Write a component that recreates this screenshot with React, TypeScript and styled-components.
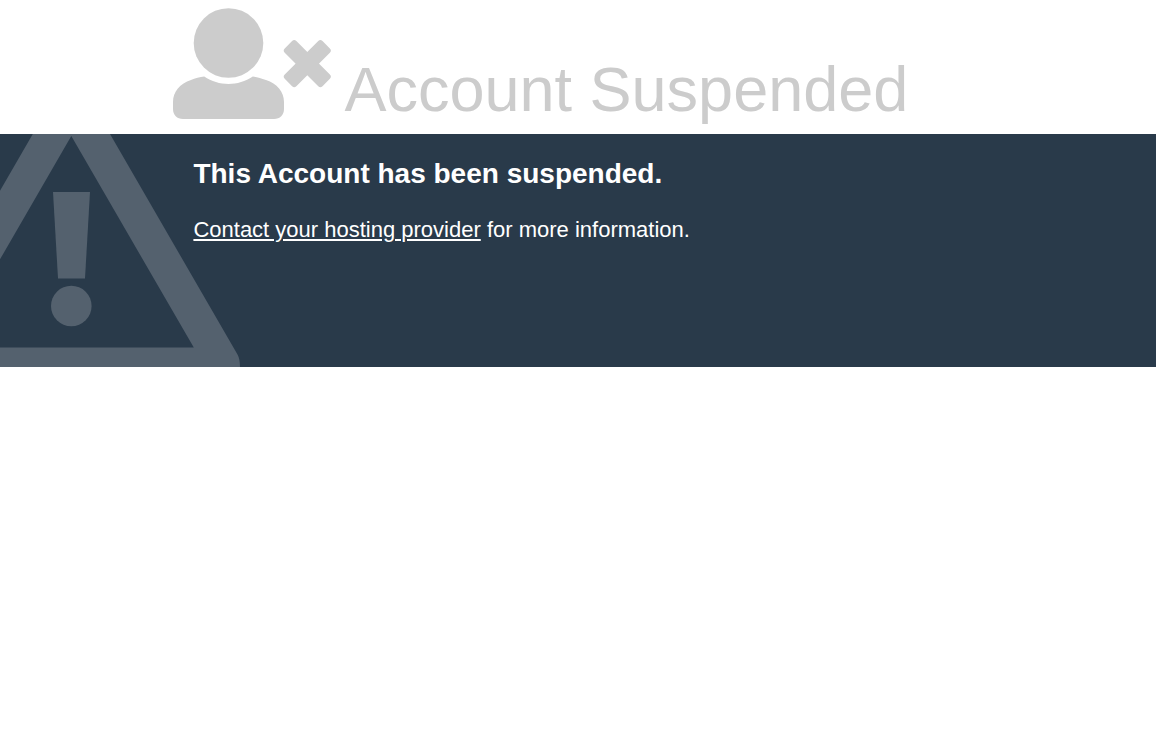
import React from "react";
import styled, { createGlobalStyle } from "styled-components";

const GlobalStyle = createGlobalStyle`
  *, *::before, *::after {
    box-sizing: border-box;
  }

  body {
    margin: 0;
    background: #ffffff;
    color: #cccccc;
    font-family: Arial, "Liberation Sans", Helvetica, sans-serif;
  }
`;

const Container = styled.div`
  width: 70%;
  margin: 0 auto;
`;

const HeaderRow = styled(Container)`
  display: flex;
  align-items: flex-end;
  gap: 11px;
  padding: 8px 0 9px;
`;

const UserIcon = styled.svg`
  flex: none;
  display: block;
  width: 160px;
  height: 117px;
  fill: #cccccc;
`;

const Title = styled.h1`
  margin: 0;
  font-size: 63px;
  font-weight: 400;
  line-height: 72px;
`;

const Panel = styled.section`
  position: relative;
  overflow: hidden;
  min-height: 233px;
  background: #293a4a;
  color: #ffffff;
`;

const WarningIcon = styled.svg`
  position: absolute;
  top: 0;
  left: 0;
  width: 240px;
  height: 233px;
  fill: #54616e;
`;

const Message = styled(Container)`
  position: relative;
  display: flex;
  flex-direction: column;
  gap: 27px;
  padding: 24px 20px;
`;

const Heading = styled.h2`
  margin: 0;
  font-size: 28px;
  font-weight: 700;
  line-height: 32px;
`;

const Text = styled.p`
  margin: 0;
  font-size: 22px;
  line-height: 26px;
`;

const ContactLink = styled.a`
  color: inherit;
  text-decoration: underline;
`;

export default function App() {
  return (
    <>
      <GlobalStyle />
      <header>
        <HeaderRow>
          <UserIcon viewBox="0 0 160 117" aria-hidden="true">
            <circle cx="55.5" cy="35" r="34.8" />
            <path d="M31.2 68.6 C46 78.5 65 78.5 79.8 68.6 C84 69.4 88 70.4 93 72 C104 75.5 111 84 111 94 V101 C111 107 107 111 101 111 H10 C4 111 0 107 0 101 V94 C0 84 7 75.5 18 72 C22 70.4 27 69.2 31.2 68.6 Z" />
            <g transform="translate(134.3 55.6)">
              <rect x="-26.7" y="-8.2" width="53.4" height="16.4" rx="3" transform="rotate(45)" />
              <rect x="-26.7" y="-8.2" width="53.4" height="16.4" rx="3" transform="rotate(-45)" />
            </g>
          </UserIcon>
          <Title>Account Suspended</Title>
        </HeaderRow>
      </header>
      <main>
        <Panel>
          <WarningIcon viewBox="0 0 240 233" aria-hidden="true">
            <path
              fillRule="evenodd"
              d="M32.8 0 H110 L237.5 220.5 Q240 225 240 233 H-97 V225 Z M71.3 2 L-51 213.6 H193.8 Z"
            />
            <path d="M53 58 H90 L85 144.6 H58 Z" />
            <circle cx="71.3" cy="172" r="20.3" />
          </WarningIcon>
          <Message>
            <Heading>This Account has been suspended.</Heading>
            <Text>
              <ContactLink href="#contact">Contact your hosting provider</ContactLink> for more information.
            </Text>
          </Message>
        </Panel>
      </main>
    </>
  );
}
